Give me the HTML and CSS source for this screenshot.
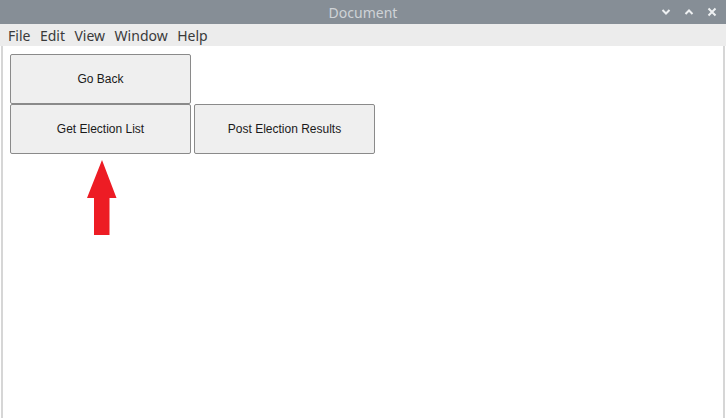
FILE: index.html
```html
<!DOCTYPE html>
<html>
<head>
<meta charset="utf-8">
<link rel="stylesheet" href="styles.css">
</head>
<body>
<div class="window">
  <div class="titlebar">
    <span class="title">Document</span>
    <div class="controls">
      <svg class="ctl" width="10" height="8" viewBox="0 0 10 8"><path d="M1.5 2 L5 5.5 L8.5 2" fill="none" stroke="#eef0f2" stroke-width="2"/></svg>
      <svg class="ctl" width="10" height="8" viewBox="0 0 10 8"><path d="M1.5 6 L5 2.5 L8.5 6" fill="none" stroke="#eef0f2" stroke-width="2"/></svg>
      <svg class="ctl" width="10" height="10" viewBox="0 0 10 10"><path d="M1.5 1.5 L8.5 8.5 M8.5 1.5 L1.5 8.5" fill="none" stroke="#eef0f2" stroke-width="2"/></svg>
    </div>
  </div>
  <div class="menubar">
    <span class="menu">File</span>
    <span class="menu">Edit</span>
    <span class="menu">View</span>
    <span class="menu">Window</span>
    <span class="menu">Help</span>
  </div>
  <div class="content">
    <div class="grid">
      <button class="btn">Go Back</button>
      <div class="row">
        <button class="btn">Get Election List</button>
        <button class="btn">Post Election Results</button>
      </div>
    </div>
    <svg class="arrow" width="30" height="76" viewBox="0 0 30 76"><polygon points="15,0 29.5,38 22.5,38 22.5,75 7,75 7,38 0,38" fill="#ed1c24"/></svg>
  </div>
</div>
</body>
</html>
```
FILE: styles.css
```css
html, body {
  margin: 0;
  padding: 0;
  background: #ffffff;
}
.window {
  width: 726px;
  height: 418px;
  display: flex;
  flex-direction: column;
  overflow: hidden;
}
.titlebar {
  height: 24px;
  background: #868e96;
  position: relative;
  display: flex;
  align-items: center;
  justify-content: center;
  flex: none;
}
.title {
  font-family: "Noto Sans", "DejaVu Sans", sans-serif;
  font-size: 14px;
  color: #cfd3d7;
}
.controls {
  position: absolute;
  right: 9px;
  top: 7px;
  display: flex;
  gap: 13px;
  align-items: center;
}
.ctl {
  display: block;
}
.menubar {
  height: 22px;
  background: #ececec;
  display: flex;
  align-items: center;
  padding-left: 8px;
  gap: 9.5px;
  flex: none;
}
.menu {
  font-family: "Noto Sans", "DejaVu Sans", sans-serif;
  font-size: 14px;
  color: #3a3a3a;
}
.content {
  flex: 1;
  position: relative;
  border-left: 2px solid #d6d6d6;
  border-right: 2px solid #d6d6d6;
  margin: 0 1px;
  padding: 8px 0 0 7px;
  background: #ffffff;
}
.grid {
  display: flex;
  flex-direction: column;
  align-items: flex-start;
}
.row {
  display: flex;
  gap: 3px;
}
.btn {
  width: 181px;
  height: 50px;
  box-sizing: border-box;
  border: 1px solid #8a8a8a;
  border-radius: 2px;
  background: #efefef;
  font-family: "Liberation Sans", Arial, sans-serif;
  font-size: 12px;
  color: #1a1a1a;
  padding: 0;
  margin: 0;
}
.arrow {
  position: absolute;
  left: 84px;
  top: 114px;
}
```
